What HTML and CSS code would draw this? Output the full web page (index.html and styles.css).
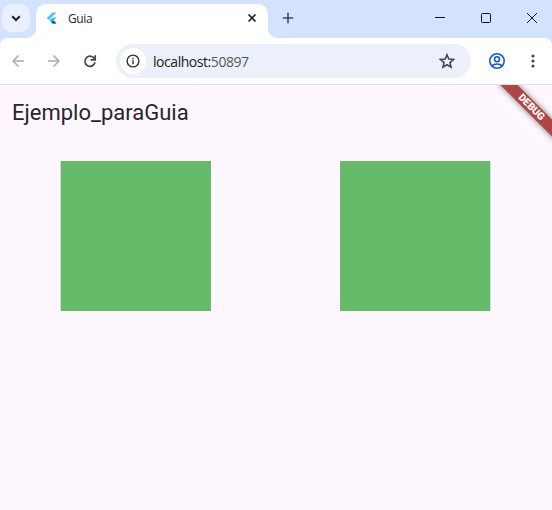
FILE: index.html
```html
<!DOCTYPE html>
<html lang="es">
<head>
<meta charset="utf-8">
<title>Guia</title>
<link rel="stylesheet" href="styles.css">
</head>
<body>
<div class="window">
  <header class="tabstrip">
    <button class="search" aria-label="Buscar pestañas"><svg width="28" height="28" viewBox="0 0 28 28"><path d="M10.200 12.200 14 16l3.800-3.800" fill="none" stroke="#1f2227" stroke-width="2"/></svg></button>
    <div class="tab">
      <svg class="logo" width="12" height="12" viewBox="0 0 12 12"><path d="M6.600.5h3.900L2.700 8.100.8 6.100z" fill="#40c4ff"/><path d="M6.600 5.400h3.900L7.500 8.500 10.500 11.500H6.600L3.700 8.500z" fill="#40c4ff"/><path d="m3.700 8.500 1.900-1.900 1.900 1.900-1.900 1.900z" fill="#29b6f6"/><path d="M5.600 10.400 7.500 8.500l3 3H6.700z" fill="#01479b"/></svg>
      <span class="tab-title">Guia</span>
      <svg class="tab-close" width="10" height="10" viewBox="0 0 10 10"><path d="m1.500 1.500 7 7m0-7-7 7" stroke="#202124" stroke-width="1.700"/></svg>
    </div>
    <svg class="plus" width="12" height="12" viewBox="0 0 12 12"><path d="M6 .8v10.400M.8 6h10.400" stroke="#474b52" stroke-width="1.600"/></svg>
    <div class="controls">
      <svg width="46" height="36" viewBox="0 0 46 36"><path d="M18 17.500h10" stroke="#111"/></svg>
      <svg width="46" height="36" viewBox="0 0 46 36"><rect x="18.500" y="13.500" width="9" height="9" rx="1" fill="none" stroke="#111"/></svg>
      <svg width="46" height="36" viewBox="0 0 46 36"><path d="m18 13 10 10m0-10L18 23" stroke="#111"/></svg>
    </div>
  </header>
  <div class="toolbar-bg">
    <nav class="toolbar">
      <svg width="36" height="20" viewBox="0 0 36 20"><path d="M24 10H13m5.500-5.500L13 10l5.500 5.500" fill="none" stroke="#aaabad" stroke-width="1.500"/></svg>
      <svg width="36" height="20" viewBox="0 0 36 20"><path d="M12 10h11m-5.500-5.500L23 10l-5.500 5.500" fill="none" stroke="#aaabad" stroke-width="1.500"/></svg>
      <svg width="36" height="20" viewBox="0 0 36 20"><path d="M22.600 8A5.100 5.100 0 1 0 23 11.300M23.200 4.200v4.600h-4.600" fill="none" stroke="#45484c" stroke-width="1.700"/></svg>
      <div class="address">
        <span class="info"><svg width="16" height="16" viewBox="0 0 16 16"><circle cx="8" cy="8" r="5.900" fill="none" stroke="#303236" stroke-width="1.400"/><path d="M8 7.200v4M8 4.700v1.500" stroke="#303236" stroke-width="1.400"/></svg></span>
        <span class="url">localhost:<span class="port">50897</span></span>
        <svg class="star" width="16" height="16" viewBox="0 0 16 16"><path d="m8 1.800 1.800 4.300 4.700.4-3.500 3.100 1 4.500L8 11.700l-4 2.400 1-4.500-3.500-3.100 4.700-.4z" fill="none" stroke="#44474b" stroke-width="1.600"/></svg>
      </div>
      <svg class="profile" width="18" height="18" viewBox="0 0 18 18"><g fill="none" stroke="#1559cf" stroke-width="1.600"><circle cx="9" cy="9" r="7.200"/><circle cx="9" cy="7.200" r="2.500"/><path d="M3.800 13.900C6.500 11.300 11.500 11.300 14.200 13.900"/></g></svg>
      <svg class="menu" width="4" height="16" viewBox="0 0 4 16"><g fill="#44474b"><circle cx="2" cy="3" r="1.600"/><circle cx="2" cy="8" r="1.600"/><circle cx="2" cy="13" r="1.600"/></g></svg>
    </nav>
  </div>
  <main class="app">
    <div class="debug"><span>DEBUG</span></div>
    <h1>Ejemplo_paraGuia</h1>
    <div class="boxes"><div class="box"></div><div class="box"></div></div>
  </main>
</div>
</body>
</html>
```
FILE: styles.css
```css
* { box-sizing: border-box; }
body { margin: 0; }
svg { display: block; flex: none; }
.window {
  width: 552px;
  height: 510px;
  display: flex;
  flex-direction: column;
  overflow: hidden;
  font-family: "Open Sans", "Noto Sans", sans-serif;
}
.tabstrip {
  height: 38px;
  flex: none;
  display: flex;
  background: #d3e3fd;
}
.search {
  width: 28px;
  height: 28px;
  margin: 4px 6px 0 2px;
  padding: 0;
  border: 0;
  border-radius: 9px;
  background: #e9f1fe;
}
.tab {
  position: relative;
  width: 232px;
  height: 34px;
  margin-top: 4px;
  padding: 0 11px 6px 10px;
  display: flex;
  align-items: center;
  background: #fff;
  border-radius: 10px 10px 0 0;
}
.tab::before, .tab::after {
  content: "";
  position: absolute;
  bottom: 0;
  width: 10px;
  height: 10px;
}
.tab::before {
  left: -10px;
  background: radial-gradient(circle at 0 0, transparent 9.500px, #fff 10.500px);
}
.tab::after {
  right: -10px;
  background: radial-gradient(circle at 100% 0, transparent 9.500px, #fff 10.500px);
}
.tab-title {
  margin-left: 10px;
  padding-top: 2px;
  font-size: 12px;
  line-height: 16px;
  letter-spacing: -0.4px;
  color: #1f1f1f;
}
.tab-close { margin-left: auto; }
.plus { margin: 12px 0 0 14px; }
.controls { display: flex; margin-left: auto; margin-right: -3px; }
.toolbar-bg {
  height: 47px;
  flex: none;
  background: #d3e3fd;
}
.toolbar {
  height: 47px;
  display: flex;
  align-items: center;
  background: #fff;
  border-bottom: 1px solid #dfe1e0;
  border-radius: 7px 7px 0 0;
}
.address {
  width: 355px;
  height: 34px;
  margin-left: 8px;
  padding: 0 16px 0 4px;
  display: flex;
  align-items: center;
  border-radius: 17px;
  background: #ebf0fa;
}
.info {
  width: 26px;
  height: 26px;
  display: grid;
  place-items: center;
  border-radius: 50%;
  background: #fff;
}
.url {
  margin-left: 7px;
  padding-top: 1px;
  font-size: 14px;
  line-height: 20px;
  letter-spacing: -0.45px;
  color: #202124;
}
.port { color: #55585d; }
.star { margin-left: auto; }
.profile { margin-left: 17px; }
.menu { margin-left: 25px; }
.app {
  position: relative;
  flex: 1;
  overflow: hidden;
  background: #fef7ff;
}
h1 {
  margin: 0;
  padding: 14px 12px 0;
  font: 400 22px/28px Roboto, sans-serif;
  color: #28262b;
}
.boxes {
  display: flex;
  gap: 129px;
  padding: 34px 0 0 61px;
}
.box {
  width: 150px;
  height: 150px;
  background: #66bb6a;
}
.box:first-child { box-shadow: -1px 0 #c5e3ca; }
.box:last-child { box-shadow: 1px 0 #c5e3ca; }
.debug {
  position: absolute;
  top: 16.300px;
  right: -19px;
  width: 80px;
  height: 12px;
  transform: rotate(45deg);
  background: #b14545;
  box-shadow: 0 0 6px rgba(0, 0, 0, 0.5);
  color: #fff;
  font: 900 10.200px/12px Roboto, sans-serif;
  text-align: center;
}
.debug span { padding-left: 1px; }
```
